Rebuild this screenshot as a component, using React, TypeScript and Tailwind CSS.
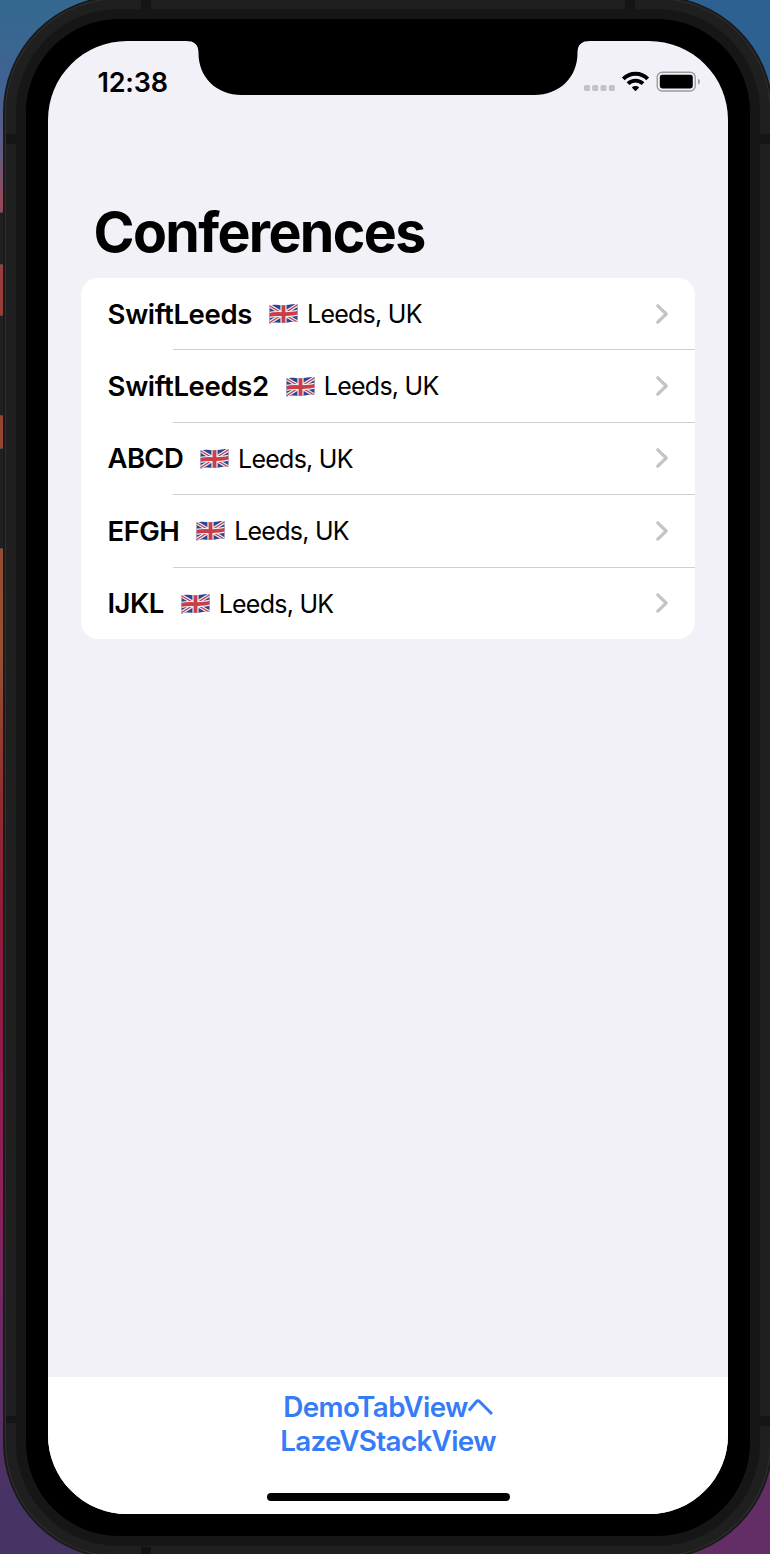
import React from "react";

const conferences = [
  { name: "SwiftLeeds", tracking: "tracking-[-0.35px]" },
  { name: "SwiftLeeds2", tracking: "tracking-[-0.35px]" },
  { name: "ABCD", tracking: "tracking-[-0.7px]" },
  { name: "EFGH", tracking: "tracking-[-0.6px]" },
  { name: "IJKL", tracking: "tracking-[-0.6px]" },
];

function Flag() {
  return (
    <svg className="h-6 w-[29px] shrink-0" viewBox="0 0 29 24">
      <defs>
        <clipPath id="flag-wave">
          <path d="M0.5 3.4C5 1.8 9 3.3 14 3.3S24 1.3 28.5 2.2V19.6C24 18.8 19 20.8 14 20.8S5 19.8 0.5 21.8Z" />
        </clipPath>
      </defs>
      <g clipPath="url(#flag-wave)">
        <rect width="29" height="24" fill="#2b4691" />
        <path d="M0 3.5L29 20.5M0 21L29 2.5" stroke="#f2f0f2" strokeWidth="3.6" />
        <path d="M0 3.5L29 20.5M0 21L29 2.5" stroke="#c93c48" strokeWidth="1.3" />
        <path d="M0 13C9 10.4 18 14 29 10.6M14.5 0V24" fill="none" stroke="#f2f0f2" strokeWidth="6.2" />
        <path d="M0 13C9 10.4 18 14 29 10.6M14.5 0V24" fill="none" stroke="#c93e49" strokeWidth="3.8" />
      </g>
    </svg>
  );
}

function StatusIcons() {
  return (
    <svg className="h-6 w-[118px]" viewBox="0 0 118 24">
      <g fill="#c3c3c7">
        <rect x="1" y="15" width="6" height="6" rx="1.5" />
        <rect x="9.2" y="15" width="6" height="6" rx="1.5" />
        <rect x="17.5" y="15" width="6" height="6" rx="1.5" />
        <rect x="25.8" y="15" width="6" height="6" rx="1.5" />
      </g>
      <path d="M40.3 8.9a17.2 17.2 0 0 1 24.4 0" fill="none" stroke="#000" strokeWidth="3.9" />
      <path d="M45 13.7a10.6 10.6 0 0 1 15 0" fill="none" stroke="#000" strokeWidth="3.8" />
      <path d="M52.5 21.2l3.7-3.8a5.4 5.4 0 0 0-7.4 0z" />
      <rect x="74.2" y="2.2" width="38" height="18.8" rx="5" fill="none" stroke="#9c9ca0" strokeWidth="1.4" />
      <rect x="76.8" y="4.8" width="33" height="13.6" rx="2.4" />
      <path d="M115 8.8c2.6.8 2.6 5 0 5.8z" fill="#9c9ca0" />
    </svg>
  );
}

function Row({ name, tracking, last }: { name: string; tracking: string; last: boolean }) {
  return (
    <li>
      <button className="flex h-[71.4px] w-full items-center pr-[27.5px] pl-[26.6px] text-left">
        <span className={`pt-px text-[27.5px] font-semibold ${tracking}`}>{name}</span>
        <span className="ml-[17px] pt-px"><Flag /></span>
        <span className="ml-[9px] grow pt-[2px] text-[25px] tracking-[-0.75px]">Leeds, UK</span>
        <svg className="h-5 w-3" viewBox="0 0 12 20" fill="none" stroke="#c4c4c7" strokeWidth="3.2" strokeLinecap="round" strokeLinejoin="round">
          <path d="M1.8 1.8L10.2 10L1.8 18.2" />
        </svg>
      </button>
      {!last && <div className="ml-[92px] h-px bg-[#cfcfd1]" />}
    </li>
  );
}

function SideButtons() {
  return (
    <div className="absolute top-[212px] left-0 flex w-[5px] flex-col">
      <div className="h-[53px] border-y border-[#484846] bg-[#202020]" />
      <div className="mt-[50px] h-[101px] border-y border-[#484846] bg-[#202020]" />
      <div className="mt-[32px] h-[101px] border-y border-[#484846] bg-[#202020]" />
    </div>
  );
}

function AntennaBands() {
  return (
    <>
      <div className="absolute top-0 left-[141px] h-[9px] w-[10px] bg-[#151515]" />
      <div className="absolute top-0 left-[625px] h-[9px] w-[10px] bg-[#151515]" />
      <div className="absolute bottom-0 left-[141px] h-[7px] w-[10px] bg-[#121212]" />
      <div className="absolute top-[134px] left-[6px] h-[10px] w-[10px] bg-[#151515]" />
      <div className="absolute top-[134px] left-[760px] h-[10px] w-[10px] bg-[#151515]" />
      <div className="absolute top-[1416px] left-[6px] h-[7px] w-[10px] bg-[#151515]" />
      <div className="absolute top-[1416px] left-[760px] h-[10px] w-[10px] bg-[#151515]" />
    </>
  );
}

function Screen() {
  return (
    <main className="relative flex h-[1473px] w-[680px] flex-col overflow-hidden rounded-[79px] bg-[#f2f1f7]">
      <header className="flex h-[160px] items-start justify-between pt-[29px] pr-[27px] pl-[49.5px]">
        <span className="text-[27px] leading-[26px] font-semibold tracking-[-0.2px]">12:38</span>
        <StatusIcons />
      </header>
      <svg className="absolute top-0 left-[138px] h-[55px] w-[404px]" viewBox="0 0 404 55">
        <path d="M0 0C8 0 12.5 3 12.5 12C12.5 36 30 54 56 54H348C374 54 391.5 36 391.5 12C391.5 3 396 0 404 0Z" />
      </svg>
      <h1 className="pl-[45.5px] text-[55.5px] leading-[62px] font-bold tracking-[-1.65px]">Conferences</h1>
      <ul className="mt-[15px] mr-[33px] ml-[33px] overflow-hidden rounded-[17px] bg-white">
        {conferences.map((c, i) => (
          <Row key={c.name} name={c.name} tracking={c.tracking} last={i === conferences.length - 1} />
        ))}
      </ul>
      <footer className="mt-auto flex h-[137px] flex-col items-center bg-white pt-[13px] text-[27.8px] leading-[34px] font-[560] text-[#357cf6]">
        <a className="flex items-center tracking-[-0.6px]">
          DemoTabView
          <svg className="h-[18px] w-[25px]" viewBox="0 0 25 18" fill="none" stroke="currentColor" strokeWidth="3">
            <path d="M1 12.5L8.5 3.5Q10 2 11.5 3.5L24 16" />
          </svg>
        </a>
        <a className="tracking-[-0.65px]">LazeVStackView</a>
        <div className="mt-[35px] h-[8px] w-[243px] rounded-full bg-black" />
      </footer>
    </main>
  );
}

export default function App() {
  return (
    <div className="relative h-[1554px] w-[770px] overflow-hidden bg-[linear-gradient(180deg,#34698f_0%,#426293_6%,#65597f_10%,#964858_13%,#963c3c_18%,#964530_28%,#965033_42%,#902b30_52%,#901b3d_60%,#90205a_76%,#632d66_88%,#463465_97%)] font-['Inter','Liberation_Sans',sans-serif] text-black">
      <div className="absolute top-0 right-0 h-[200px] w-[200px] bg-[#2d6192]" />
      <div className="absolute right-0 bottom-0 h-[200px] w-[200px] bg-[#622e65]" />
      <SideButtons />
      <div className="relative -mt-[4px] ml-[3px] w-[770px] rounded-[116px] border-2 border-[#1a1a1a] bg-[#303030] p-px">
        <div className="rounded-[113px] bg-[#1f1f1f] p-[10px]">
          <div className="rounded-[103px] bg-[#161616] p-[10px]">
            <div className="rounded-[93px] bg-black p-[22px]">
              <Screen />
            </div>
          </div>
        </div>
      </div>
      <AntennaBands />
    </div>
  );
}
